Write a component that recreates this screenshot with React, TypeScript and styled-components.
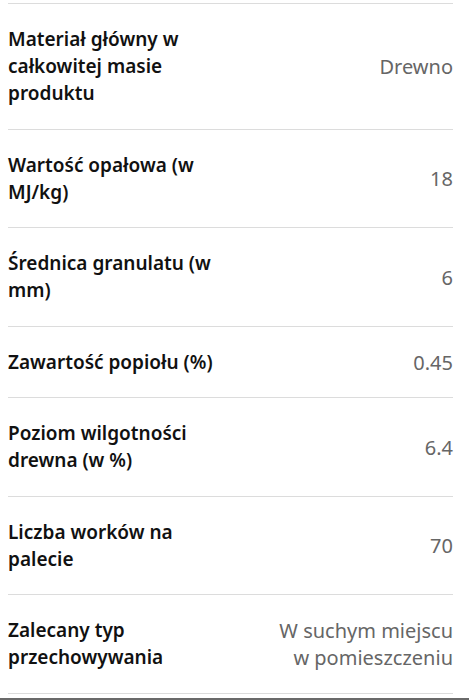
import React from 'react';
import styled, { createGlobalStyle } from 'styled-components';

const GlobalStyle = createGlobalStyle`
  html, body {
    margin: 0;
    padding: 0;
    background: #ffffff;
  }
  body {
    font-family: 'Noto Sans', 'Liberation Sans', sans-serif;
    color: #111111;
  }
`;

const Page = styled.div`
  height: 700px;
  display: flex;
  flex-direction: column;
  overflow: hidden;
  border-bottom: 2px solid #6a6a6a;
  box-sizing: border-box;
`;

const SpecList = styled.dl`
  margin: 3px 16px 0 8px;
  padding: 0;
  border-top: 1px solid #dcdcdc;
`;

const SpecRow = styled.div`
  display: flex;
  align-items: center;
  padding: 22px 0 21.5px;
  border-bottom: 1px solid #dcdcdc;
`;

const Label = styled.dt`
  flex: 0 0 50%;
  margin: 0;
  font-size: 19px;
  line-height: 27px;
  font-weight: 600;
  color: #111111;
`;

const Value = styled.dd`
  flex: 1;
  margin: 0;
  padding-left: 32px;
  font-size: 20px;
  line-height: 27px;
  font-weight: 400;
  color: #666666;
  text-align: right;
`;

interface Spec {
  label: string;
  value: string;
}

const specs: Spec[] = [
  { label: 'Materiał główny w całkowitej masie produktu', value: 'Drewno' },
  { label: 'Wartość opałowa (w MJ/kg)', value: '18' },
  { label: 'Średnica granulatu (w mm)', value: '6' },
  { label: 'Zawartość popiołu (%)', value: '0.45' },
  { label: 'Poziom wilgotności drewna (w %)', value: '6.4' },
  { label: 'Liczba worków na palecie', value: '70' },
  { label: 'Zalecany typ przechowywania', value: 'W suchym miejscu w pomieszczeniu' },
];

const App: React.FC = () => {
  return (
    <>
      <GlobalStyle />
      <Page>
        <SpecList>
          {specs.map((spec) => (
            <SpecRow key={spec.label}>
              <Label>{spec.label}</Label>
              <Value>{spec.value}</Value>
            </SpecRow>
          ))}
        </SpecList>
      </Page>
    </>
  );
};

export default App;
